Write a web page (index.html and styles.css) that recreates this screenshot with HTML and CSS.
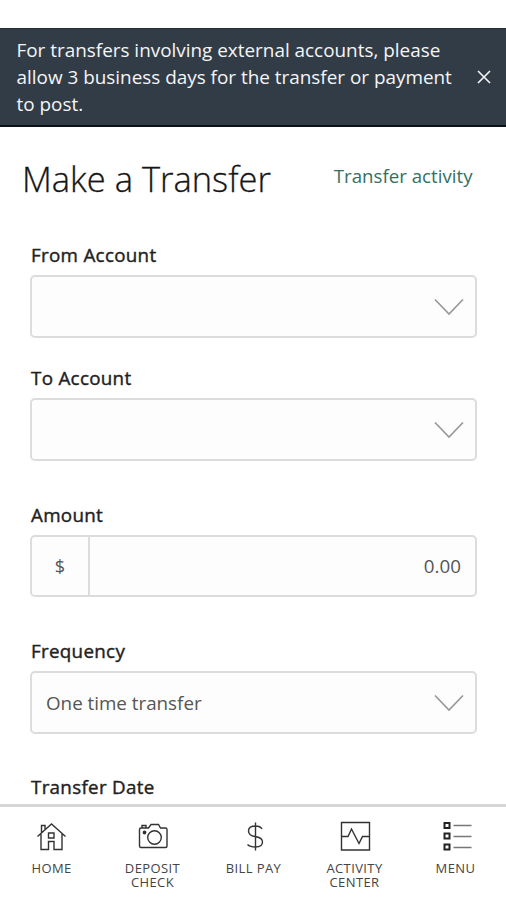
FILE: index.html
```html
<!DOCTYPE html>
<html lang="en">
<head>
<meta charset="utf-8">
<title>Make a Transfer</title>
<link rel="stylesheet" href="styles.css">
</head>
<body>
<div class="screen">
  <div class="banner">
    <p class="banner-text">For transfers involving external accounts, please<br>allow 3 business days for the transfer or payment<br>to post.</p>
    <svg class="close" width="14" height="14" viewBox="0 0 14 14"><path d="M1 1 13 13M13 1 1 13"/></svg>
  </div>
  <main class="content">
    <header class="heading">
      <h1 class="title">Make a Transfer</h1>
      <a class="activity-link">Transfer activity</a>
    </header>
    <section class="field from">
      <div class="label">From Account</div>
      <div class="box"><svg class="chevron" width="30" height="18" viewBox="0 0 30 18"><path d="M1 1.5 15 16 29 1.5"/></svg></div>
    </section>
    <section class="field to">
      <div class="label">To Account</div>
      <div class="box"><svg class="chevron" width="30" height="18" viewBox="0 0 30 18"><path d="M1 1.5 15 16 29 1.5"/></svg></div>
    </section>
    <section class="field amount">
      <div class="label">Amount</div>
      <div class="box money"><span class="currency">$</span><span class="value">0.00</span></div>
    </section>
    <section class="field frequency">
      <div class="label">Frequency</div>
      <div class="box"><span class="choice">One time transfer</span><svg class="chevron" width="30" height="18" viewBox="0 0 30 18"><path d="M1 1.5 15 16 29 1.5"/></svg></div>
    </section>
    <section class="field date">
      <div class="label">Transfer Date</div>
    </section>
  </main>
  <nav class="tabs">
    <div class="tab">
      <svg class="icon" width="32" height="32" viewBox="0 0 32 32"><path d="M1.500 15.500 15.500 3 29.500 15.500M5 13V28.500H12.500V20.500H18V28.500H26V13M5.500 11.500V4.500H9V8M12.500 12H18V17H12.500Z"/></svg>
      <span>HOME</span>
    </div>
    <div class="tab">
      <svg class="icon" width="32" height="32" viewBox="0 0 32 32"><path d="M4 7H11.500L14 3.500H21.500L23.500 7H28.500Q30 7 30 8.500V25Q30 26.500 28.500 26.500H4Q2.500 26.500 2.500 25V8.500Q2.500 7 4 7ZM5 6.500V4.500H9V6.500"/><circle cx="17.500" cy="16.500" r="6.800"/><circle class="dot" cx="7.500" cy="11.500" r="1.200"/></svg>
      <span>DEPOSIT<br>CHECK</span>
    </div>
    <div class="tab">
      <svg class="icon" width="32" height="32" viewBox="0 0 32 32"><path d="M24 8Q22.500 5 17.500 5 10.500 5 10.500 10 10.500 14.500 17 15.500 24.500 16.500 24.500 21 24.500 26 17.500 26 12 26 9.500 23.500M17.500 1.500V29.500"/></svg>
      <span>BILL PAY</span>
    </div>
    <div class="tab">
      <svg class="icon" width="32" height="32" viewBox="0 0 32 32"><path d="M2.500 1.500H30.500V29H2.500ZM3 15.500H9L12.500 8 20 22.500 23.500 15.500H30"/></svg>
      <span>ACTIVITY<br>CENTER</span>
    </div>
    <div class="tab">
      <svg class="icon" width="32" height="32" viewBox="0 0 32 32"><path class="marks" d="M4.500 2H9.500V7H4.500ZM4.500 12.500H9.500V17.500H4.500ZM4.500 23.500H9.500V28.500H4.500Z"/><path class="lines" d="M13.500 4.500H31.500M13.500 15.500H31.500M13.500 26.500H31.500"/></svg>
      <span>MENU</span>
    </div>
  </nav>
</div>
</body>
</html>
```
FILE: styles.css
```css
* { box-sizing: border-box; }
body {
  margin: 0;
  background: #fff;
  font-family: "Open Sans", sans-serif;
}
.screen {
  display: flex;
  flex-direction: column;
  height: 900px;
  padding-top: 28px;
  overflow: hidden;
}
.banner {
  display: flex;
  flex: none;
  align-items: center;
  justify-content: space-between;
  height: 99px;
  padding: 0 15px 0 16.5px;
  background: #323c47;
  border-top: 1px solid #252e38;
  border-bottom: 2px solid #0b1118;
  color: #f4f5f6;
}
.banner-text {
  margin: 0;
  font-size: 18.9px;
  line-height: 27px;
  white-space: nowrap;
}
.close { fill: none; stroke: #f4f5f6; stroke-width: 1.6; }
.content {
  flex: 1;
  min-height: 0;
  overflow: hidden;
  padding: 27px 30px 0;
}
.heading {
  display: flex;
  justify-content: space-between;
  height: 89px;
  padding-right: 3.5px;
  margin-left: -8px;
}
.title {
  margin: 0;
  font-size: 34.5px;
  font-weight: 300;
  line-height: 49px;
  color: #161616;
  -webkit-text-stroke: 0.3px #161616;
  white-space: nowrap;
}
.activity-link {
  font-size: 18.7px;
  line-height: 44px;
  color: #346f61;
  white-space: nowrap;
}
.label {
  height: 32px;
  padding-left: 1px;
  font-size: 18.8px;
  letter-spacing: 0.3px;
  line-height: 24px;
  color: #222;
  -webkit-text-stroke: 0.4px #222;
}
.box {
  display: flex;
  align-items: center;
  height: 63px;
  width: 447px;
  padding: 0 14px 0 14px;
  background: #fdfdfd;
  border: 2px solid #dcdcdc;
  border-radius: 5px;
  color: #555;
  font-size: 18.8px;
}
.chevron {
  margin-left: auto;
  margin-right: -3px;
  fill: none;
  stroke: #999;
  stroke-width: 1.7;
}
.from { margin-bottom: 28px; }
.to { margin-bottom: 42px; }
.amount { margin-bottom: 42px; }
.frequency { margin-bottom: 41px; }
.money { padding-left: 0; height: 62px; }
.currency {
  display: flex;
  align-items: center;
  justify-content: center;
  height: 100%;
  width: 58px;
  border-right: 2px solid #dcdcdc;
  font-size: 18px;
}
.value { margin-left: auto; }
.tabs {
  display: grid;
  grid-template-columns: repeat(5, 101px);
  flex: none;
  height: 96px;
  padding: 14px 0 0 1px;
  border-top: 3px solid #d6d6d6;
  background: #fff;
}
.tab {
  display: flex;
  flex-direction: column;
  align-items: center;
  gap: 8px;
  font-size: 13px;
  line-height: 14px;
  letter-spacing: 0.4px;
  text-align: center;
  color: #444;
}
.icon { fill: none; stroke: #333; stroke-width: 1.4; }
.icon .dot { fill: #222; }
.icon .marks { stroke: #222; stroke-width: 2; }
.icon .lines { stroke: #777; }
```
